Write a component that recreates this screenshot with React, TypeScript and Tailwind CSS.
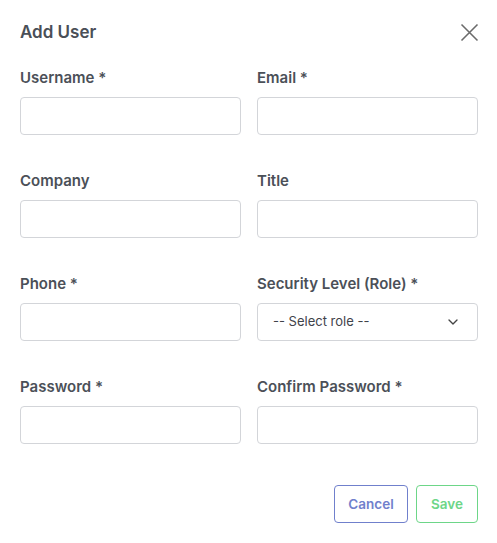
import { ChevronDown } from "lucide-react";

const font = { fontFamily: 'Inter, "Noto Sans", sans-serif' };

function Field({ label, children }: { label: string; children?: React.ReactNode }) {
  return (
    <div className="flex flex-col">
      <label className="text-[15px] leading-5 font-semibold text-[#4b5058] mt-px mb-[9px]">{label}</label>
      {children ?? (
        <input className="h-[38px] w-full rounded border border-[#d3d5d9] bg-white px-3 text-sm outline-none" />
      )}
    </div>
  );
}

export default function App() {
  return (
    <div style={font} className="w-[497px] h-[543px] bg-white rounded-md px-5 pr-[19px] pt-5 pb-5 flex flex-col">
      <div className="flex items-center justify-between h-6">
        <h2 className="text-[17px] leading-6 font-semibold text-[#4a4f57]">Add User</h2>
        <button className="text-[#6b6b6b] -mr-px">
          <svg width="19" height="19" viewBox="0 0 19 19" fill="none" stroke="currentColor" strokeWidth="1.6">
            <path d="M1.5 1.5 L17.5 17.5 M17.5 1.5 L1.5 17.5" />
          </svg>
        </button>
      </div>

      <div className="grid grid-cols-2 gap-x-4 gap-y-[35px] mt-[23px]">
        <Field label="Username *" />
        <Field label="Email *" />
        <Field label="Company" />
        <Field label="Title" />
        <Field label="Phone *" />
        <Field label="Security Level (Role) *">
          <div className="h-[38px] w-full rounded border border-[#d3d5d9] bg-white pl-[15px] pr-4 flex items-center justify-between">
            <span className="text-[13px] text-[#3f434a]">-- Select role --</span>
            <ChevronDown className="w-4 h-4 text-[#444]" strokeWidth={2} />
          </div>
        </Field>
        <Field label="Password *" />
        <Field label="Confirm Password *" />
      </div>

      <div className="flex justify-end gap-2 mt-[41px]">
        <button className="h-[38px] w-[74px] rounded border border-[#7080cc] text-[#7080cc] text-[13.5px] font-semibold">
          Cancel
        </button>
        <button className="h-[38px] w-[62px] rounded border border-[#6dd688] text-[#6dd688] text-[13.5px] font-semibold">
          Save
        </button>
      </div>
    </div>
  );
}
